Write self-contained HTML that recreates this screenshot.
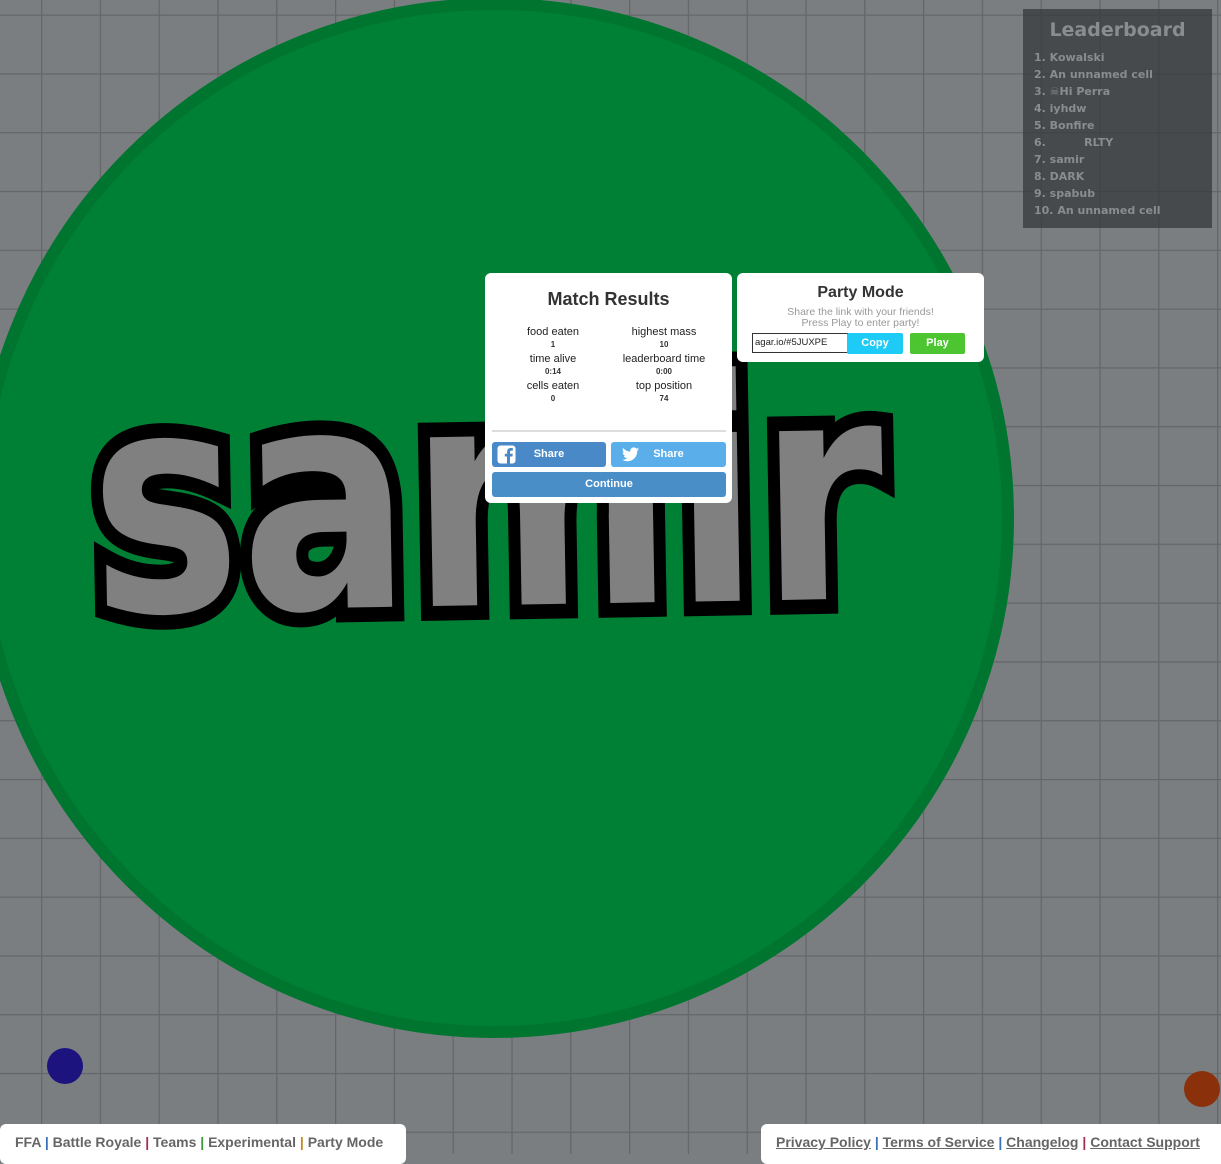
<!DOCTYPE html>
<html><head><meta charset="utf-8"><style>
html,body{margin:0;padding:0;width:1221px;height:1154px;overflow:hidden;background:#7b7e81;font-family:"Liberation Sans",sans-serif}
#bg{position:absolute;left:0;top:0}
.panel{position:absolute;background:#fff;border-radius:6px;box-sizing:border-box}
#mr{left:485px;top:273px;width:247px;height:230px}
#mr h2{margin:0;position:absolute;top:16px;width:100%;text-align:center;font-size:18px;font-weight:bold;color:#333}
.stat{position:absolute;width:110px;text-align:center;color:#222;font-size:11px}
.stat b{display:block;font-size:8px;color:#333;margin-top:2px}
.btn{position:absolute;border-radius:3px;color:#fff;font-weight:bold;font-size:11px;text-align:center}
#pm{left:737px;top:273px;width:247px;height:89px}
#lb{position:absolute;left:1023px;top:9px;width:189px;height:219px;background:rgba(50,52,54,0.7)}
#lb h3{margin:0;position:absolute;top:10px;width:100%;text-align:center;font-family:"DejaVu Sans",sans-serif;font-size:19px;font-weight:bold;color:#8a8c8e}
#lb div.l{position:absolute;left:11px;font-family:"DejaVu Sans",sans-serif;font-size:11px;font-weight:bold;color:#8a8c8e;line-height:17px;top:40px;white-space:pre}
.foot{position:absolute;top:1124px;height:40px;background:#fff;border-radius:6px;font-size:14px;font-weight:bold;color:#666;padding-top:10px;box-sizing:border-box}
.foot a{color:#666;text-decoration:none}
</style></head><body>
<svg id="bg" width="1221" height="1154" xmlns="http://www.w3.org/2000/svg">
<defs><pattern id="g" x="41" y="14.5" width="58.8" height="58.8" patternUnits="userSpaceOnUse"><path d="M0 0H58.8M0 0V58.8" stroke="#646668" stroke-width="2.5" fill="none"/></pattern></defs>
<rect width="1221" height="1154" fill="url(#g)"/>
<circle cx="65" cy="1066" r="18" fill="#1c137f"/>
<circle cx="1202" cy="1089" r="18" fill="#8a300a"/>
<circle cx="494" cy="518" r="514" fill="#008035" stroke="#007530" stroke-width="12"/>
<circle cx="718" cy="400" r="28" fill="#000"/>
<g transform="translate(92,612) rotate(-1) scale(0.8,0.98)">
<text x="0" y="0" font-family="DejaVu Sans" font-weight="bold" font-size="315" fill="#808080" stroke="#000" stroke-width="30" stroke-linejoin="miter" paint-order="stroke">samir</text>
</g>
</svg>
<div id="lb"><h3>Leaderboard</h3><div class="l">1. Kowalski
2. An unnamed cell
3. ☠Hi Perra
4. iyhdw
5. Bonfire
6.          RLTY
7. samir
8. DARK
9. spabub
10. An unnamed cell</div></div>
<div class="panel" id="mr"><h2>Match Results</h2>
<div class="stat" style="left:13px;top:53px">food eaten<b>1</b></div>
<div class="stat" style="left:124px;top:53px">highest mass<b>10</b></div>
<div class="stat" style="left:13px;top:80px">time alive<b>0:14</b></div>
<div class="stat" style="left:124px;top:80px">leaderboard time<b>0:00</b></div>
<div class="stat" style="left:13px;top:107px">cells eaten<b>0</b></div>
<div class="stat" style="left:124px;top:107px">top position<b>74</b></div>
<div style="position:absolute;left:7px;top:157px;width:234px;height:2px;background:#ddd"></div>
<div class="btn" style="left:7px;top:169px;width:114px;height:25px;background:#4a89c8;line-height:25px">
<svg style="position:absolute;left:5px;top:3px" width="19" height="19" viewBox="0 0 19 19"><rect x="0.5" y="0.5" width="18" height="18" rx="3" fill="#fff"/><path d="M13 19V11.5h2.4l.4-2.8H13V7c0-.8.3-1.4 1.4-1.4h1.5V3.1c-.3 0-1.2-.1-2.2-.1-2.1 0-3.6 1.3-3.6 3.7v2H7.8v2.8H10V19z" fill="#4a89c8"/></svg>Share</div>
<div class="btn" style="left:126px;top:169px;width:115px;height:25px;background:#5aaeea;line-height:25px">
<svg style="position:absolute;left:11px;top:5px" width="17" height="15" viewBox="0 0 24 20"><path d="M24 2.4c-.9.4-1.8.7-2.8.8 1-.6 1.8-1.6 2.2-2.7-1 .6-2 1-3.1 1.2C19.3.7 18 0 16.6 0c-2.7 0-4.9 2.2-4.9 4.9 0 .4 0 .8.1 1.1C7.7 5.8 4.1 3.9 1.7.9c-.4.7-.7 1.6-.7 2.5 0 1.7.9 3.2 2.2 4.1-.8 0-1.6-.2-2.2-.6v.1c0 2.4 1.7 4.4 3.9 4.8-.4.1-.8.2-1.3.2-.3 0-.6 0-.9-.1.6 2 2.4 3.4 4.6 3.4-1.7 1.3-3.8 2.1-6.1 2.1-.4 0-.8 0-1.2-.1 2.2 1.4 4.8 2.2 7.5 2.2 9.1 0 14-7.5 14-14v-.6c1-.7 1.8-1.6 2.5-2.5z" fill="#fff"/></svg>Share</div>
<div class="btn" style="left:7px;top:199px;width:234px;height:25px;background:#4a8ec8;line-height:25px">Continue</div>
</div>
<div class="panel" id="pm">
<div style="position:absolute;top:11px;width:100%;text-align:center;font-size:16px;font-weight:bold;color:#333">Party Mode</div>
<div style="position:absolute;top:34px;width:100%;text-align:center;font-size:10.5px;color:#999;line-height:11px">Share the link with your friends!<br>Press Play to enter party!</div>
<div style="position:absolute;left:15px;top:60px;width:96px;height:20px;border:1px solid #333;box-sizing:border-box;font-size:9.5px;line-height:18px;padding-left:2px;color:#222">agar.io/#5JUXPE</div>
<div class="btn" style="left:110px;top:60px;width:56px;height:21px;background:#1ecbf7;line-height:21px;border-radius:2px">Copy</div>
<div class="btn" style="left:173px;top:60px;width:55px;height:21px;background:#4cc530;line-height:21px;border-radius:2px">Play</div>
</div>
<div class="foot" style="left:0;width:406px;padding-left:15px"><a>FFA</a> <span style="color:#3a6fc0">|</span> <a>Battle Royale</a> <span style="color:#a03050">|</span> <a>Teams</a> <span style="color:#3a9a3a">|</span> <a>Experimental</a> <span style="color:#c08a20">|</span> <a>Party Mode</a></div>
<div class="foot" style="left:761px;width:470px;padding-left:15px"><a style="text-decoration:underline">Privacy Policy</a> <span style="color:#3a6fc0">|</span> <a style="text-decoration:underline">Terms of Service</a> <span style="color:#3a6fc0">|</span> <a style="text-decoration:underline">Changelog</a> <span style="color:#a03050">|</span> <a style="text-decoration:underline">Contact Support</a></div>
</body></html>
